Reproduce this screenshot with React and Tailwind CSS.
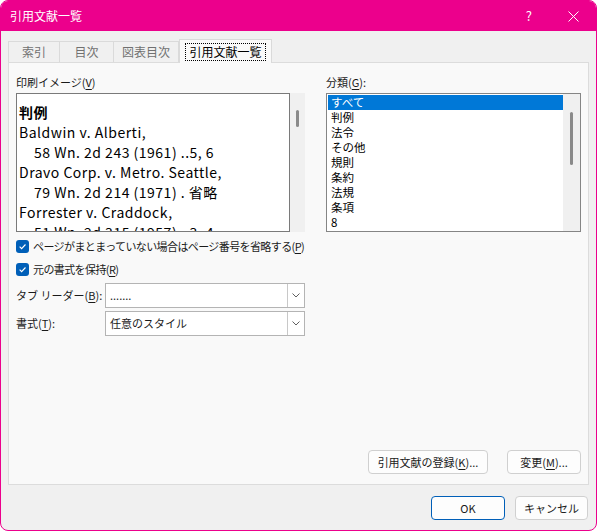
import React from 'react';

const font = { fontFamily: '"Noto Sans CJK JP", "Noto Sans", sans-serif' };

// preview lines in 印刷イメージ
const previewLines = [
  { text: '判例', bold: true },
  { text: 'Baldwin v. Alberti,' },
  { text: '58 Wn. 2d 243 (1961) ..5, 6', indent: true },
  { text: 'Dravo Corp. v. Metro. Seattle,' },
  { text: '79 Wn. 2d 214 (1971) . 省略', indent: true },
  { text: 'Forrester v. Craddock,' },
  { text: '51 Wn. 2d 315 (1957) ..3, 4', indent: true },
];

const categories = ['すべて', '判例', '法令', 'その他', '規則', '条約', '法規', '条項', '8'];

function Check({ children }) {
  return (
    <div className="flex items-center h-[16px]">
      <span className="w-[13px] h-[13px] shrink-0 rounded-[3px] bg-[#005fb8] flex items-center justify-center">
        <svg width="9" height="9" viewBox="0 0 10 10">
          <path d="M1.8 5.2 L4 7.3 L8.3 2.8" stroke="white" strokeWidth="1.3" fill="none" />
        </svg>
      </span>
      <span className="ml-[4px] text-[11px] tracking-[-0.6px] whitespace-nowrap text-[#1a1a1a]">{children}</span>
    </div>
  );
}

function Combo({ value }) {
  return (
    <div className="ml-auto w-[200px] h-[25px] bg-white border border-[#b4b4b4] flex shrink-0">
      <div className="flex-1 flex items-center pl-[4px] text-[11px] text-[#1a1a1a]">{value}</div>
      <div className="w-[17px] border-l border-[#c8c8c8] flex items-center justify-center">
        <svg width="8" height="5" viewBox="0 0 8 5">
          <path d="M0.5 0.5 L4 4 L7.5 0.5" stroke="#606060" strokeWidth="1" fill="none" />
        </svg>
      </div>
    </div>
  );
}

function Btn({ children, className = '', primary = false }) {
  return (
    <div
      className={`h-[24px] rounded-[4px] flex items-center justify-center text-[11px] whitespace-nowrap text-[#1a1a1a] ${
        primary ? 'border border-[#005fb8] bg-[#fdfdfd]' : 'border border-[#d0d0d0] bg-[#fdfdfd]'
      } ${className}`}
    >
      {children}
    </div>
  );
}

const U = ({ children }) => <span className="underline underline-offset-2">{children}</span>;

export default function App() {
  return (
    <div style={font} className="w-[597px] h-[531px] bg-[#f0f0f0] border border-[#ec008c] rounded-[8px] overflow-hidden flex flex-col">
      {/* title bar */}
      <div className="h-[30px] bg-[#ec008c] flex items-center text-white shrink-0">
        <span className="ml-[9px] text-[12px]">引用文献一覧</span>
        <span className="ml-auto text-[13px] mr-[36px]">?</span>
        <svg className="mr-[17px]" width="11" height="11" viewBox="0 0 11 11">
          <path d="M0.5 0.5 L10.5 10.5 M10.5 0.5 L0.5 10.5" stroke="white" strokeWidth="1" />
        </svg>
      </div>

      <div className="px-[7px] flex flex-col">
        {/* tabs */}
        <div className="mt-[8px] flex items-end h-[23px] text-[12px]">
          <div className="w-[52px] h-[21px] border border-b-0 border-[#dadada] bg-[#f0f0f0] text-[#707070] flex items-center justify-center">索引</div>
          <div className="w-[54px] h-[21px] border border-b-0 border-l-0 border-[#dadada] bg-[#f0f0f0] text-[#707070] flex items-center justify-center">目次</div>
          <div className="w-[65px] h-[21px] border border-b-0 border-l-0 border-[#dadada] bg-[#f0f0f0] text-[#707070] flex items-center justify-center">図表目次</div>
          <div className="w-[93px] h-[24px] -mb-[1px] relative z-10 border border-b-0 border-[#dadada] bg-[#f9f9f9] text-black flex items-center justify-center">
            <span className="border border-dotted border-black px-[3px] leading-[16px]">引用文献一覧</span>
          </div>
        </div>

        {/* panel */}
        <div className="h-[423px] border border-[#dcdcdc] bg-[#f9f9f9] flex flex-col pl-[7px] pr-[6px]">
          <div className="flex mt-[11px]">
            {/* left column */}
            <div className="w-[289px] flex flex-col">
              <div className="h-[16px] text-[11px] leading-[16px] text-[#1a1a1a]">印刷イメージ(<U>V</U>)</div>
              <div className="mt-[3px] flex h-[139px]">
                <div className="w-[274px] h-full border border-[#7a7a7a] bg-white overflow-hidden pt-[8px] pl-[2px]">
                  {previewLines.map((l, i) => (
                    <div
                      key={i}
                      className={`h-[20px] leading-[20px] text-[14px] tracking-[0.5px] whitespace-nowrap text-black ${l.bold ? 'font-bold' : ''} ${l.indent ? 'pl-[15px]' : ''}`}
                    >
                      {l.text}
                    </div>
                  ))}
                </div>
                <div className="w-[15px] h-full bg-[#f0f0f0] flex justify-center">
                  <div className="mt-[17px] w-[3px] h-[17px] bg-[#8a8a8a] rounded-full" />
                </div>
              </div>
              <div className="mt-[6px] flex flex-col gap-[7px]">
                <Check>
                  ページがまとまっていない場合はページ番号を省略する(<U>P</U>)
                </Check>
                <Check>
                  元の書式を保持(<U>R</U>)
                </Check>
              </div>
              <div className="mt-[6px] flex items-center text-[11px] text-[#1a1a1a]">
                <span className="whitespace-pre">タブ リーダー(<U>B</U>):</span>
                <Combo value="......." />
              </div>
              <div className="mt-[3px] flex items-center text-[11px] text-[#1a1a1a]">
                <span className="whitespace-nowrap">書式(<U>T</U>):</span>
                <Combo value="任意のスタイル" />
              </div>
            </div>

            {/* right column */}
            <div className="ml-[21px] w-[255px] flex flex-col">
              <div className="h-[16px] text-[11px] leading-[16px] text-[#1a1a1a]">分類(<U>G</U>):</div>
              <div className="mt-[3px] h-[139px] border border-[#858585] bg-white flex">
                <div className="flex-1 pt-[1px] pl-[1px]">
                  {categories.map((c, i) => (
                    <div
                      key={c}
                      className={`h-[15px] leading-[15px] text-[11.5px] pl-[3px] ${i === 0 ? 'bg-[#0078d7] text-white' : 'text-black'}`}
                    >
                      {c}
                    </div>
                  ))}
                </div>
                <div className="w-[17px] bg-[#f0f0f0] flex justify-center">
                  <div className="mt-[18px] w-[3px] h-[53px] bg-[#8a8a8a] rounded-full" />
                </div>
              </div>
            </div>
          </div>

          <div className="mt-auto mb-[10px] mr-[1px] flex justify-end gap-[19px]">
            <Btn className="w-[120px]">
              引用文献の登録(<U>K</U>)...
            </Btn>
            <Btn className="w-[74px]">
              変更(<U>M</U>)...
            </Btn>
          </div>
        </div>

        {/* footer */}
        <div className="mt-[11px] flex justify-end gap-[10px] pr-[1px]">
          <Btn primary className="w-[74px]">OK</Btn>
          <Btn className="w-[73px]">キャンセル</Btn>
        </div>
      </div>
    </div>
  );
}
